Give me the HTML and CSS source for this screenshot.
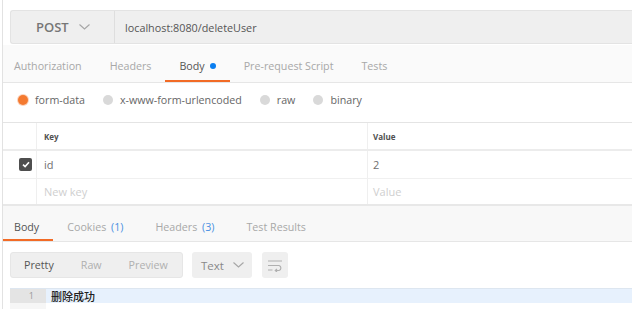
FILE: index.html
```html
<!DOCTYPE html>
<html>
<head>
<meta charset="utf-8">
<link rel="stylesheet" href="styles.css">
</head>
<body>
<div class="app">
  <div class="urlrow">
    <div class="bar">
      <div class="method">
        <span>POST</span>
        <svg class="chev" width="11" height="6" viewBox="0 0 11 6"><path d="M0.5 0.5 L5.5 5 L10.5 0.5" fill="none" stroke="#a6a6a6" stroke-width="1.1"/></svg>
      </div>
      <div class="url">localhost:8080/deleteUser</div>
    </div>
  </div>

  <div class="tabs">
    <div class="tab first">Authorization</div>
    <div class="tab">Headers</div>
    <div class="tab active">Body<span class="dot"></span></div>
    <div class="tab">Pre-request Script</div>
    <div class="tab">Tests</div>
  </div>

  <div class="radios">
    <div class="radio on"><span class="circle"></span>form-data</div>
    <div class="radio"><span class="circle"></span>x-www-form-urlencoded</div>
    <div class="radio"><span class="circle"></span>raw</div>
    <div class="radio"><span class="circle"></span>binary</div>
  </div>

  <div class="table">
    <div class="row head">
      <div class="cchk"></div>
      <div class="ckey">Key</div>
      <div class="cval">Value</div>
    </div>
    <div class="row">
      <div class="cchk"><span class="checkbox"><svg width="8" height="7" viewBox="0 0 8 7"><path d="M1 3.6 L3.1 5.6 L7 1.2" fill="none" stroke="#fff" stroke-width="1.6"/></svg></span></div>
      <div class="ckey txt">id</div>
      <div class="cval txt">2</div>
    </div>
    <div class="row last">
      <div class="cchk"></div>
      <div class="ckey ph">New key</div>
      <div class="cval ph">Value</div>
    </div>
  </div>

  <div class="rtabs">
    <div class="rtab active">Body</div>
    <div class="rtab count">Cookies <span class="cnt">(1)</span></div>
    <div class="rtab count">Headers <span class="cnt">(3)</span></div>
    <div class="rtab">Test Results</div>
  </div>

  <div class="toolbar">
    <div class="group">
      <span class="gbtn sel">Pretty</span>
      <span class="gbtn">Raw</span>
      <span class="gbtn">Preview</span>
    </div>
    <div class="drop">
      <span>Text</span>
      <svg width="11" height="6" viewBox="0 0 11 6"><path d="M0.5 0.5 L5.5 5 L10.5 0.5" fill="none" stroke="#a6a6a6" stroke-width="1.1"/></svg>
    </div>
    <div class="wrapbtn">
      <svg width="16" height="13" viewBox="0 0 16 13"><path d="M1 2 H15 M1 6.5 H12 A2.6 2.6 0 0 1 12 11.5 H8.5 M10 10 L8.3 11.5 L10 13 M1 11 H5.5" fill="none" stroke="#b0b0b0" stroke-width="1.2"/></svg>
    </div>
  </div>

  <div class="code">
    <div class="line">
      <span class="gutter">1</span>
      <span class="ctext">删除成功</span>
    </div>
    <div class="line2"><span class="gutter"></span></div>
  </div>
</div>
</body>
</html>
```
FILE: styles.css
```css
* { box-sizing: border-box; }
html, body { margin: 0; padding: 0; background: #fff; }
body { font-family: "Open Sans", "Noto Sans", sans-serif; font-size: 10.7px; color: #505050; }

.app {
  margin-left: 2px;
  border-left: 1px solid #e2e2e2;
  height: 309px;
  overflow: hidden;
}

.urlrow { padding: 10px 0 0 7px; height: 45px; }
.bar {
  display: flex;
  height: 34px;
  background: #efefef;
  border: 1px solid #e3e3e3;
  border-right: none;
  border-radius: 3px 0 0 3px;
}
.method {
  width: 104px;
  border-right: 1px solid #dedede;
  display: flex;
  align-items: center;
  padding-left: 25px;
  font-size: 13px;
  font-weight: 600;
  color: #767676;
}
.method .chev { margin-left: 10px; }
.url {
  display: flex;
  align-items: center;
  padding-left: 10px;
  color: #555;
  font-size: 10.8px;
}

.tabs {
  display: flex;
  height: 38px;
  background: #fafafa;
  border-bottom: 1px solid #e6e6e6;
}
.tab {
  padding: 13px 14px 0;
  height: 37px;
  line-height: 16px;
  color: #a8a8a8;
  border-bottom: 2px solid transparent;
}
.tab.first { padding-left: 11px; }
.tab.active { color: #555; border-bottom-color: #f26b26; }
.tab .dot {
  display: inline-block;
  width: 6px; height: 6px;
  border-radius: 50%;
  background: #0b7ef0;
  margin-left: 5px;
  vertical-align: 1px;
}

.radios {
  display: flex;
  height: 39px;
  padding: 9px 0 0 15px;
}
.radio {
  display: flex;
  align-items: center;
  height: 16px;
  color: #666;
  margin-right: 18px;
}
.circle {
  width: 10px; height: 10px;
  border-radius: 50%;
  background: #d9d9d9;
  margin-right: 7px;
}
.radio.on .circle {
  background: #f47a30;
  box-shadow: 0 0 0 1px #fbd3bd;
}

.table { border-top: 1px solid #e4e4e4; }
.row {
  display: flex;
  height: 28px;
  border-bottom: 1px solid #f0f0f0;
}
.row.head { border-bottom: 2px solid #ececec; }
.row.last { height: 27px; border-bottom: 2px solid #e8e8e8; }
.cchk {
  width: 34px;
  border-right: 1px solid #efefef;
  display: flex;
  align-items: center;
  justify-content: flex-end;
  padding-right: 4px;
}
.ckey {
  width: 331px;
  border-right: 1px solid #efefef;
  display: flex;
  align-items: center;
  padding-left: 7px;
}
.cval {
  flex: 1;
  display: flex;
  align-items: center;
  padding-left: 5px;
}
.head .ckey, .head .cval { font-size: 8px; font-weight: 700; color: #505050; }
.txt { color: #707070; font-size: 11px; }
.ph { color: #cfcfcf; font-size: 11px; }
.checkbox {
  width: 13px; height: 13px;
  border-radius: 2px;
  background: #4e4e4e;
  display: flex;
  align-items: center;
  justify-content: center;
}

.rtabs {
  display: flex;
  height: 36px;
  background: #f8f8f8;
  border-bottom: 1px solid #e6e6e6;
}
.rtab {
  padding: 13px 14px 0;
  height: 35px;
  line-height: 16px;
  color: #a8a8a8;
  border-bottom: 2px solid transparent;
}
.rtab:first-child { padding-left: 11px; }
.rtab.count { padding-right: 18px; }
.rtab.active { color: #555; border-bottom-color: #f26b26; }
.cnt { color: #4a90e2; margin-left: 2px; }

.toolbar {
  display: flex;
  padding: 10px 0 0 7px;
  height: 46px;
  gap: 9px;
}
.group {
  display: flex;
  align-items: center;
  width: 173px;
  height: 26px;
  background: #efefef;
  border: 1px solid #e6e6e6;
  border-radius: 3px;
  padding-left: 13px;
}
.gbtn { color: #b0b0b0; margin-right: 27px; }
.gbtn.sel { color: #555; }
.drop {
  display: flex;
  align-items: center;
  width: 60px;
  height: 26px;
  background: #efefef;
  border-radius: 3px;
  padding-left: 9px;
  color: #888;
  font-size: 11.5px;
}
.drop svg { margin-left: 9px; }
.wrapbtn {
  width: 26px;
  height: 26px;
  background: #efefef;
  border-radius: 3px;
  margin-left: 1px;
  display: flex;
  align-items: center;
  justify-content: center;
}

.code { padding-left: 7px; }
.line {
  display: flex;
  height: 15px;
  background: #e7f1fd;
  border-top: 1px solid #dde6f0;
}
.gutter {
  width: 36px;
  background: #e4e4e4;
  color: #999;
  font-size: 9px;
  text-align: right;
  padding-right: 12px;
  line-height: 14px;
}
.ctext {
  padding-left: 5px;
  font-family: "Noto Sans CJK SC", sans-serif;
  font-size: 11px;
  font-weight: 500;
  color: #222;
  line-height: 14px;
}
.line2 { display: flex; height: 10px; }
.line2 .gutter { background: #f6f6f6; }
```
